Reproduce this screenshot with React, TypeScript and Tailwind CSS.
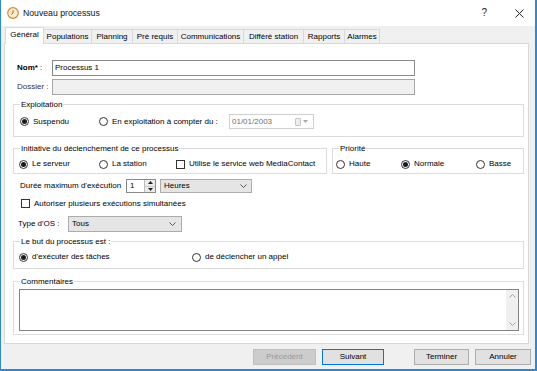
import React from 'react'

// Windows dialog "Nouveau processus", onglet Général

function Radio({ checked }: { checked?: boolean }) {
  return (
    <span className="w-[9px] h-[9px] rounded-full border border-[#333] bg-white flex items-center justify-center shrink-0">
      {checked && <span className="w-[5px] h-[5px] rounded-full bg-[#1a1a1a]" />}
    </span>
  )
}

function Checkbox() {
  return <span className="w-[9px] h-[9px] border border-[#333] bg-white shrink-0" />
}

function Option({ label, checked, width, box }: { label: string; checked?: boolean; width?: string; box?: boolean }) {
  return (
    <div className={`flex items-center gap-[4px] shrink-0 ${width ?? ''}`}>
      {box ? <Checkbox /> : <Radio checked={checked} />}
      <span className="whitespace-nowrap">{label}</span>
    </div>
  )
}

function GroupBox({ title, className, children }: { title: string; className?: string; children?: React.ReactNode }) {
  return (
    <div className={`relative border border-[#dcdcdc] shrink-0 ${className ?? ''}`}>
      <span className="absolute -top-[5px] left-[6px] bg-white px-[1px] leading-[10px] whitespace-nowrap">{title}</span>
      {children}
    </div>
  )
}

function Chevron({ className }: { className?: string }) {
  return (
    <svg width="7" height="4" viewBox="0 0 7 4" className={className}>
      <polyline points="0.5,0.5 3.5,3.5 6.5,0.5" fill="none" stroke="#555" strokeWidth="1" />
    </svg>
  )
}

const tabs = [
  { label: 'Général', w: 'w-[39px]' },
  { label: 'Populations', w: 'w-[48px]' },
  { label: 'Planning', w: 'w-[41px]' },
  { label: 'Pré requis', w: 'w-[45px]' },
  { label: 'Communications', w: 'w-[66px]' },
  { label: 'Différé station', w: 'w-[60px]' },
  { label: 'Rapports', w: 'w-[41px]' },
  { label: 'Alarmes', w: 'w-[35px]' },
]

export default function App() {
  return (
    <div className="w-[537px] h-[371px] flex flex-col bg-[#f0f0f0] border-l border-r-2 border-b-2 border-[#2b8ad6] text-[8px] text-black font-['Liberation_Sans',Arial,sans-serif] leading-none overflow-hidden">
      {/* title bar */}
      <div className="h-[26px] bg-white flex items-center shrink-0">
        <svg width="12" height="12" viewBox="0 0 12 12" className="ml-[6px]">
          <circle cx="6" cy="6" r="5.3" fill="#fcecd4" stroke="#d98a2c" strokeWidth="1.2" />
          <path d="M6 3.2V6L4.2 7.6" fill="none" stroke="#9a5a1a" strokeWidth="0.9" />
        </svg>
        <span className="ml-[4px] text-[8.7px] text-[#111]">Nouveau processus</span>
        <span className="ml-auto text-[10px] text-[#222]">?</span>
        <svg width="9" height="9" viewBox="0 0 9 9" className="ml-[28px] mr-[11px]">
          <path d="M0.5 0.5L8.5 8.5M8.5 0.5L0.5 8.5" stroke="#222" strokeWidth="1" />
        </svg>
      </div>

      {/* tabs */}
      <div className="h-[17px] flex items-end pl-[4px] shrink-0">
        {tabs.map((t, i) =>
          i === 0 ? (
            <div
              key={t.label}
              className={`${t.w} h-[17px] -mb-px relative z-10 bg-white border border-b-0 border-[#d9d9d9] flex items-center justify-center pb-[2px]`}
            >
              {t.label}
            </div>
          ) : (
            <div
              key={t.label}
              className={`${t.w} h-[14px] bg-[#f0f0f0] border-t border-r border-[#d9d9d9] flex items-center justify-center whitespace-nowrap`}
            >
              {t.label}
            </div>
          )
        )}
      </div>

      {/* panel */}
      <div className="ml-[3px] w-[525px] h-[301px] bg-white border border-[#d9d9d9] flex flex-col pl-[8px] pr-[4px] shrink-0">
        <div className="mt-[16px] h-[16px] flex items-center pl-[4px] shrink-0">
          <span className="w-[35px]">
            <b>Nom*</b> :
          </span>
          <div className="w-[363px] h-[16px] border border-[#8a8a8a] flex items-center pl-[2px]">Processus 1</div>
        </div>

        <div className="mt-[3px] h-[16px] flex items-center pl-[4px] shrink-0">
          <span className="w-[35px] text-[#333]">Dossier :</span>
          <div className="w-[363px] h-[16px] border border-[#a6a6a6] bg-[#f0f0f0]" />
        </div>

        <GroupBox title="Exploitation" className="mt-[9px] h-[33px]">
          <div className="h-full flex items-center pl-[6px] pt-[2px]">
            <Option label="Suspendu" checked width="w-[79px]" />
            <Option label="En exploitation à compter du :" width="w-[130px]" />
            <div className="w-[85px] h-[15px] border border-[#cfcfcf] bg-white flex items-center pl-[2px] text-[#707070]">
              01/01/2003
              <span className="ml-auto w-[6px] h-[8px] rounded-[1px] border border-[#c4c4c4] bg-[#ededed]" />
              <svg width="5" height="3" viewBox="0 0 5 3" className="ml-[2px] mr-[5px]">
                <polygon points="0,0 5,0 2.5,3" fill="#a8a8a8" />
              </svg>
            </div>
          </div>
        </GroupBox>

        <div className="mt-[11px] h-[26px] flex gap-[5px] shrink-0">
          <GroupBox title="Initiative du déclenchement de ce processus" className="w-[314px] h-full">
            <div className="h-full flex items-center pl-[5px] pt-[6px]">
              <Option label="Le serveur" checked width="w-[80px]" />
              <Option label="La station" width="w-[77px]" />
              <Option label="Utilise le service web MediaContact" box />
            </div>
          </GroupBox>
          <GroupBox title="Priorité" className="flex-1 h-full">
            <div className="h-full flex items-center pl-[3px] pt-[6px]">
              <Option label="Haute" width="w-[65px]" />
              <Option label="Normale" checked width="w-[75px]" />
              <Option label="Basse" />
            </div>
          </GroupBox>
        </div>

        <div className="mt-[5px] h-[14px] flex items-center pl-[7px] shrink-0">
          <span className="w-[106px] whitespace-nowrap">Durée maximum d'exécution</span>
          <div className="w-[30px] h-full border border-[#8a8a8a] bg-white flex">
            <span className="flex-1 pl-[3px] flex items-center">1</span>
            <div className="w-[11px] flex flex-col border-l border-[#bdbdbd]">
              <div className="flex-1 bg-[#ececec] border-b border-[#c8c8c8] flex items-center justify-center">
                <svg width="5" height="3" viewBox="0 0 5 3">
                  <polygon points="0,3 5,3 2.5,0" fill="#222" />
                </svg>
              </div>
              <div className="flex-1 bg-[#ececec] flex items-center justify-center">
                <svg width="5" height="3" viewBox="0 0 5 3">
                  <polygon points="0,0 5,0 2.5,3" fill="#222" />
                </svg>
              </div>
            </div>
          </div>
          <div className="ml-[4px] w-[92px] h-full bg-[#e5e5e5] border border-[#acacac] flex items-center pl-[3px]">
            Heures
            <Chevron className="ml-auto mr-[4px]" />
          </div>
        </div>

        <div className="mt-[5px] h-[11px] flex items-center pl-[8px] shrink-0">
          <Option label="Autoriser plusieurs exécutions simultanées" box />
        </div>

        <div className="mt-[7px] h-[16px] flex items-center pl-[5px] shrink-0">
          <span className="w-[50px]">Type d'OS :</span>
          <div className="w-[114px] h-full bg-[#e5e5e5] border border-[#acacac] flex items-center pl-[3px]">
            Tous
            <Chevron className="ml-auto mr-[5px]" />
          </div>
        </div>

        <GroupBox title="Le but du processus est :" className="mt-[9px] h-[28px]">
          <div className="h-full flex items-center pl-[5px] pt-[4px]">
            <Option label="d'exécuter des tâches" checked width="w-[173px]" />
            <Option label="de déclencher un appel" />
          </div>
        </GroupBox>

        <GroupBox title="Commentaires" className="mt-[12px] h-[54px] flex">
          <div className="flex-1 ml-[5px] mr-[4px] mt-[7px] mb-[3px] border border-[#828282] bg-white flex justify-end">
            <div className="w-[12px] bg-[#f0f0f0] flex flex-col items-center justify-between py-[4px]">
              <Chevron className="rotate-180 opacity-50" />
              <Chevron className="opacity-50" />
            </div>
          </div>
        </GroupBox>
      </div>

      {/* buttons */}
      <div className="mt-[5px] h-[16px] flex pl-[252px] shrink-0">
        <div className="w-[63px] h-full bg-[#cccccc] border border-[#bfbfbf] text-[#9a9a9a] flex items-center justify-center">Précédent</div>
        <div className="ml-[6px] w-[62px] h-full bg-[#e1e1e1] border border-[#0078d7] flex items-center justify-center">Suivant</div>
        <div className="ml-[30px] w-[55px] h-full bg-[#e1e1e1] border border-[#adadad] flex items-center justify-center">Terminer</div>
        <div className="ml-[6px] w-[56px] h-full bg-[#e1e1e1] border border-[#adadad] flex items-center justify-center">Annuler</div>
      </div>
    </div>
  )
}
